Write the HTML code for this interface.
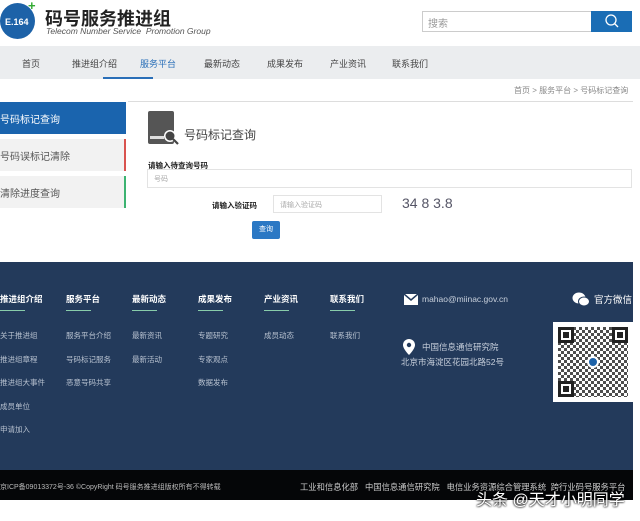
<!DOCTYPE html><html><head><meta charset="utf-8"><style>
*{margin:0;padding:0;box-sizing:border-box}
body{width:640px;height:521px;background:#fff;font-family:"Liberation Sans","Noto Sans CJK SC",sans-serif;position:relative;overflow:hidden;color:#333}
.a{position:absolute;white-space:nowrap}
.f{position:absolute;width:16px;height:16px;border:3px solid #222;background:#fff}
.f::after{content:"";position:absolute;left:2px;top:2px;width:6px;height:6px;background:#222}
</style></head><body>
<div class="a" style="left:0;top:3px;width:35px;height:36px;border-radius:50%;background:#1d62a8"></div>
<div class="a" style="left:5px;top:17px;color:#fff;font-size:9px;font-weight:bold">E.164</div>
<div class="a" style="left:28px;top:-2px;color:#3a3;font-size:13px;font-weight:bold">+</div>
<div class="a" style="left:45px;top:5px;font-size:18px;font-weight:bold;color:#222">码号服务推进组</div>
<div class="a" style="left:46px;top:26px;font-size:8.5px;font-style:italic;color:#555">Telecom Number Service&nbsp; Promotion Group</div>
<div class="a" style="left:422px;top:11px;width:170px;height:21px;border:1px solid #ccc;font-size:10px;color:#999;padding:3px 5px">搜索</div>
<div class="a" style="left:591px;top:11px;width:41px;height:21px;background:#1a6db5"></div>
<svg class="a" style="left:604px;top:13px" width="16" height="17"><circle cx="7" cy="7" r="5" stroke="#fff" stroke-width="1.3" fill="none"/><line x1="10.5" y1="10.5" x2="14" y2="14" stroke="#fff" stroke-width="1.3"/></svg>
<div class="a" style="left:0;top:46px;width:640px;height:33px;background:#ebedef"></div>
<div class="a" style="left:0;top:57px;font-size:9px;color:#444;width:640px">
<span class="a" style="left:22px">首页</span><span class="a" style="left:72px">推进组介绍</span><span class="a" style="left:140px;color:#2a6fb8">服务平台</span><span class="a" style="left:204px">最新动态</span><span class="a" style="left:267px">成果发布</span><span class="a" style="left:330px">产业资讯</span><span class="a" style="left:392px">联系我们</span></div>
<div class="a" style="left:103px;top:77px;width:50px;height:2px;background:#2a6fb8"></div>
<div class="a" style="left:514px;top:85px;font-size:8px;color:#888">首页 &gt; 服务平台 &gt; 号码标记查询</div>
<div class="a" style="left:128px;top:101px;width:505px;height:1px;background:#ddd"></div>
<div class="a" style="left:0;top:102px;width:126px;height:32px;background:#1a64ae;color:#fff;font-size:10px;padding:9px 0 0 0">号码标记查询</div>
<div class="a" style="left:0;top:139px;width:126px;height:32px;background:#f2f2f2;border-right:2px solid #d9534f;font-size:10px;color:#555;padding:9px 0 0 0">号码误标记清除</div>
<div class="a" style="left:0;top:176px;width:126px;height:32px;background:#f2f2f2;border-right:2px solid #3cb371;font-size:10px;color:#555;padding:9px 0 0 0">清除进度查询</div>
<div class="a" style="left:148px;top:111px;width:26px;height:33px;background:#555;border-radius:2px"></div>
<div class="a" style="left:150px;top:136px;width:14px;height:3px;background:#ddd"></div>
<svg class="a" style="left:162px;top:128px" width="20" height="18"><circle cx="8" cy="8" r="6" fill="#fff"/><circle cx="8" cy="8" r="4.5" fill="#444"/><line x1="11" y1="11" x2="16" y2="16" stroke="#444" stroke-width="2.2"/></svg>
<div class="a" style="left:184px;top:126px;font-size:12px;color:#444">号码标记查询</div>
<div class="a" style="left:148px;top:160px;font-size:7.5px;font-weight:bold;color:#222">请输入待查询号码</div>
<div class="a" style="left:147px;top:169px;width:485px;height:19px;border:1px solid #e3e3e3;font-size:7px;color:#aaa;padding:4px 6px">号码</div>
<div class="a" style="left:212px;top:200px;font-size:7.5px;font-weight:bold;color:#222">请输入验证码</div>
<div class="a" style="left:273px;top:195px;width:109px;height:18px;border:1px solid #e3e3e3;font-size:7px;color:#aaa;padding:4px 6px">请输入验证码</div>
<div class="a" style="left:402px;top:195px;font-size:14px;color:#556">34 8 3.8</div>
<div class="a" style="left:252px;top:221px;width:28px;height:18px;background:#2b78c4;border-radius:2px;color:#fff;font-size:7px;text-align:center;line-height:18px">查询</div>
<div class="a" style="left:0;top:262px;width:633px;height:208px;background:#233a5b"></div>
<div class="a" style="left:0;top:293px;font-size:8.5px;font-weight:bold;color:#fff;width:640px">
<span class="a" style="left:0">推进组介绍</span><span class="a" style="left:66px">服务平台</span><span class="a" style="left:132px">最新动态</span><span class="a" style="left:198px">成果发布</span><span class="a" style="left:264px">产业资讯</span><span class="a" style="left:330px">联系我们</span></div>
<div class="a" style="left:0;top:310px;width:640px">
<div class="a" style="left:0;width:25px;height:1px;background:#8ca"></div><div class="a" style="left:66px;width:25px;height:1px;background:#8ca"></div><div class="a" style="left:132px;width:25px;height:1px;background:#8ca"></div><div class="a" style="left:198px;width:25px;height:1px;background:#8ca"></div><div class="a" style="left:264px;width:25px;height:1px;background:#8ca"></div><div class="a" style="left:330px;width:25px;height:1px;background:#8ca"></div></div>
<div class="a" style="left:0;top:324px;font-size:7.5px;color:#b8c2d0;line-height:23.5px">关于推进组<br>推进组章程<br>推进组大事件<br>成员单位<br>申请加入</div>
<div class="a" style="left:66px;top:324px;font-size:7.5px;color:#b8c2d0;line-height:23.5px">服务平台介绍<br>号码标记服务<br>恶意号码共享</div>
<div class="a" style="left:132px;top:324px;font-size:7.5px;color:#b8c2d0;line-height:23.5px">最新资讯<br>最新活动</div>
<div class="a" style="left:198px;top:324px;font-size:7.5px;color:#b8c2d0;line-height:23.5px">专题研究<br>专家观点<br>数据发布</div>
<div class="a" style="left:264px;top:324px;font-size:7.5px;color:#b8c2d0;line-height:23.5px">成员动态</div>
<div class="a" style="left:330px;top:324px;font-size:7.5px;color:#b8c2d0;line-height:23.5px">联系我们</div>
<svg class="a" style="left:404px;top:294px" width="14" height="11"><rect width="14" height="11" fill="#fff"/><polyline points="0,0 7,6 14,0" stroke="#233a5b" stroke-width="1.5" fill="none"/></svg>
<div class="a" style="left:422px;top:294px;font-size:8.5px;color:#c8d0dc">mahao@miinac.gov.cn</div>
<svg class="a" style="left:572px;top:292px" width="18" height="15"><ellipse cx="7" cy="6" rx="6.5" ry="5.5" fill="#fff"/><ellipse cx="12" cy="9.5" rx="5.5" ry="4.5" fill="#fff" stroke="#233a5b"/></svg>
<div class="a" style="left:594px;top:292px;font-size:9.5px;color:#fff">官方微信</div>
<svg class="a" style="left:403px;top:339px" width="12" height="16"><path d="M6 0a6 6 0 0 1 6 6c0 4-6 10-6 10S0 10 0 6a6 6 0 0 1 6-6z" fill="#fff"/><circle cx="6" cy="6" r="2.2" fill="#233a5b"/></svg>
<div class="a" style="left:422px;top:341px;font-size:8.5px;color:#c8d0dc">中国信息通信研究院</div>
<div class="a" style="left:401px;top:356px;font-size:8.5px;color:#c8d0dc">北京市海淀区花园北路52号</div>
<div class="a" style="left:553px;top:322px;width:80px;height:80px;background:#fff"></div>
<div class="a" style="left:558px;top:327px;width:70px;height:70px;background:repeating-conic-gradient(#222 0 25%,#fff 0 50%) 0 0/6px 6px;opacity:.8"></div>
<div class="f" style="left:558px;top:327px"></div>
<div class="f" style="left:612px;top:327px"></div>
<div class="f" style="left:558px;top:381px"></div>
<div class="a" style="left:587px;top:356px;width:12px;height:12px;border-radius:50%;background:#1d62a8;border:2px solid #fff"></div>
<div class="a" style="left:0;top:470px;width:633px;height:30px;background:#050608"></div>
<div class="a" style="left:0;top:482px;font-size:7px;color:#bbb">京ICP备09013372号-36 ©CopyRight 码号服务推进组版权所有不得转载</div>
<div class="a" style="left:300px;top:481px;font-size:8.3px;color:#ccc">工业和信息化部&nbsp;&nbsp; 中国信息通信研究院&nbsp;&nbsp; 电信业务资源综合管理系统&nbsp; 跨行业码号服务平台</div>
<div class="a" style="left:476px;top:486px;font-size:16px;color:#fff;text-shadow:0 0 2px #000,0 0 2px #000">头条 @天才小明同学</div>
</body></html>
